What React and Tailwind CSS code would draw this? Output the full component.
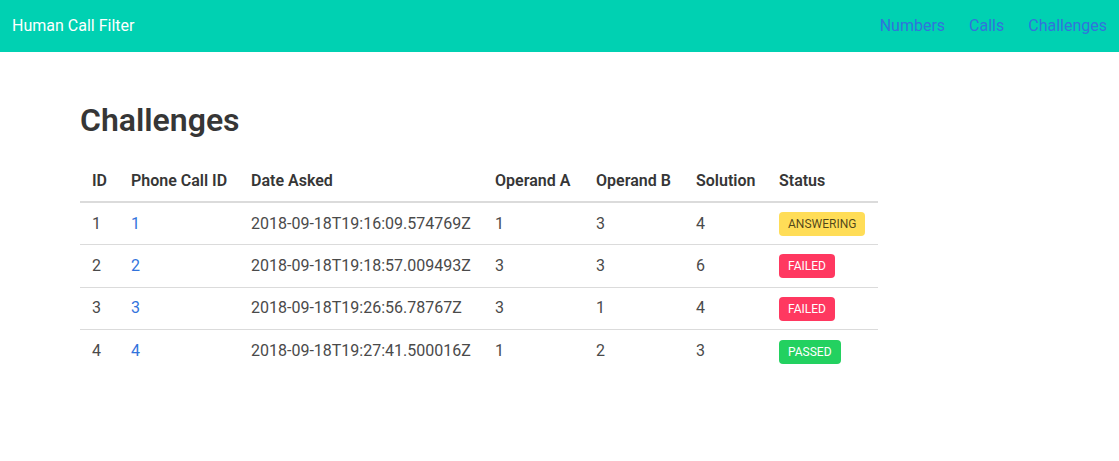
const challenges = [
  { id: 1, call: 1, date: '2018-09-18T19:16:09.574769Z', a: 1, b: 3, sol: 4, status: 'ANSWERING' },
  { id: 2, call: 2, date: '2018-09-18T19:18:57.009493Z', a: 3, b: 3, sol: 6, status: 'FAILED' },
  { id: 3, call: 3, date: '2018-09-18T19:26:56.78767Z', a: 3, b: 1, sol: 4, status: 'FAILED' },
  { id: 4, call: 4, date: '2018-09-18T19:27:41.500016Z', a: 1, b: 2, sol: 3, status: 'PASSED' },
]

const TAG_STYLES = {
  ANSWERING: 'bg-[#ffdd57] text-black/70',
  FAILED: 'bg-[#ff3860] text-white',
  PASSED: 'bg-[#23d160] text-white',
}

const COLS = [
  ['ID', 'w-[39px]'],
  ['Phone Call ID', 'w-[120px]'],
  ['Date Asked', 'w-[244px]'],
  ['Operand A', 'w-[101px]'],
  ['Operand B', 'w-[100px]'],
  ['Solution', 'w-[83px]'],
  ['Status', 'w-[111px]'],
]

function Tag({ status }) {
  return (
    <span className={`inline-flex items-center h-6 px-[9px] rounded text-xs leading-none ${TAG_STYLES[status]}`}>
      {status}
    </span>
  )
}

export default function App() {
  return (
    <div className="min-h-[461px] bg-white text-[#4a4a4a] text-base" style={{ fontFamily: 'Roboto, "Liberation Sans", sans-serif' }}>
      {/* Navbar */}
      <nav className="h-[52px] bg-[#00d1b2] flex items-stretch">
        <a className="flex items-center px-3 text-white">Human Call Filter</a>
        <div className="ml-auto flex items-stretch">
          {['Numbers', 'Calls', 'Challenges'].map((n) => (
            <a key={n} className="flex items-center px-3 text-[#3273dc]">{n}</a>
          ))}
        </div>
      </nav>

      {/* Section */}
      <section className="pt-[50px] px-20">
        <h1 className="text-[32px] leading-[36px] font-semibold text-[#363636] mb-[23px]">Challenges</h1>
        <table className="w-[798px] table-fixed border-collapse">
          <thead>
            <tr className="border-b-2 border-[#dbdbdb]">
              {COLS.map(([label, w]) => (
                <th key={label} className={`${w} px-3 py-2 text-left font-semibold text-[#363636] leading-6 whitespace-nowrap`}>{label}</th>
              ))}
            </tr>
          </thead>
          <tbody>
            {challenges.map((c, i) => (
              <tr key={c.id} className={i < challenges.length - 1 ? 'border-b border-[#dbdbdb]' : ''}>
                <td className="px-3 h-[42.5px] align-middle">{c.id}</td>
                <td className="px-3 align-middle"><a className="text-[#3273dc]">{c.call}</a></td>
                <td className="px-3 align-middle">{c.date}</td>
                <td className="px-3 align-middle">{c.a}</td>
                <td className="px-3 align-middle">{c.b}</td>
                <td className="px-3 align-middle">{c.sol}</td>
                <td className="px-3 align-middle"><Tag status={c.status} /></td>
              </tr>
            ))}
          </tbody>
        </table>
      </section>
    </div>
  )
}
